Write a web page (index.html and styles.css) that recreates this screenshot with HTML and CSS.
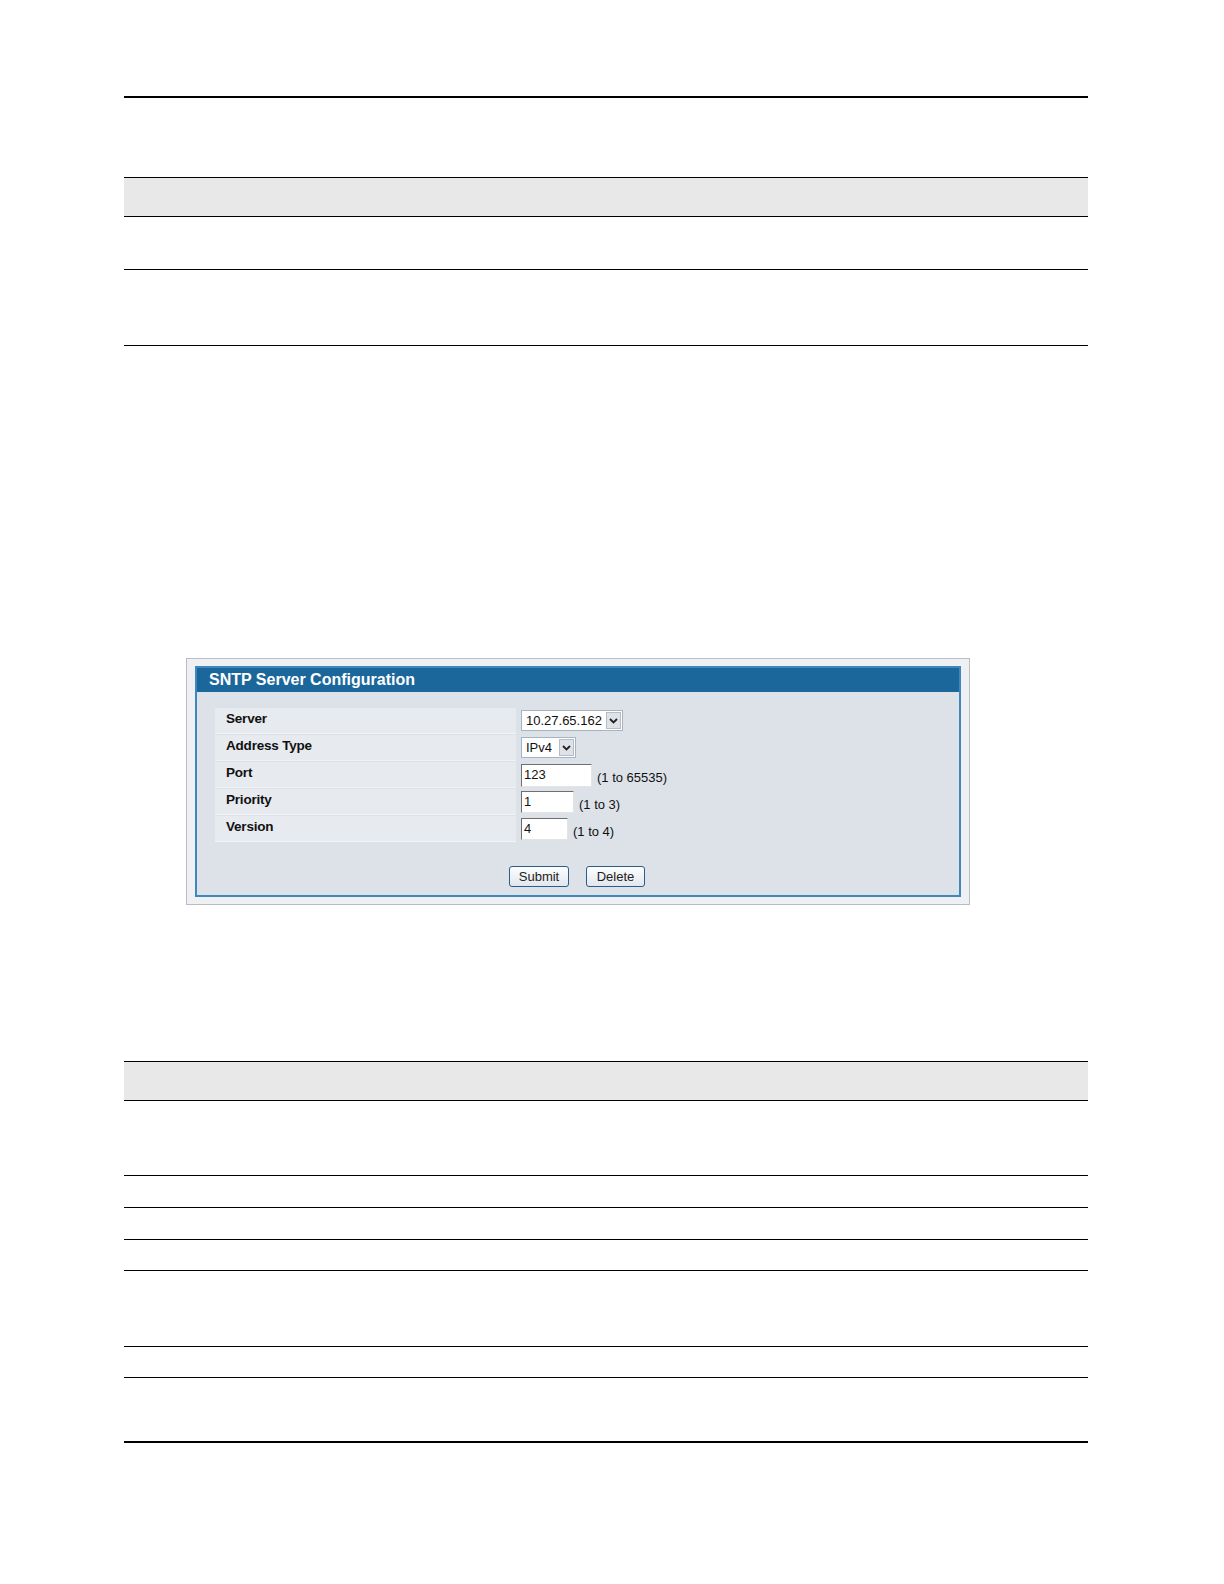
FILE: index.html
```html
<!DOCTYPE html>
<html lang="en">
<head>
<meta charset="utf-8">
<title>SNTP Server Configuration</title>
<link rel="stylesheet" href="styles.css">
</head>
<body>
<div class="page">
  <div class="rule"></div>

  <div class="doc-table t1">
    <div class="tr th h39"></div>
    <div class="tr h52"></div>
    <div class="tr h75"></div>
  </div>

  <div class="shot">
    <div class="panel">
      <div class="panel-title">SNTP Server Configuration</div>
      <div class="panel-body">
        <div class="form-grid">
          <div class="lbl">Server</div>
          <div class="val">
            <div class="select w-server"><span class="sel-text">10.27.65.162</span><span class="sel-btn"><svg width="9" height="6" viewBox="0 0 9 6"><path d="M1 1 L4.5 4.5 L8 1" fill="none" stroke="#222" stroke-width="1.8"/></svg></span></div>
          </div>
          <div class="lbl">Address Type</div>
          <div class="val">
            <div class="select w-type"><span class="sel-text">IPv4</span><span class="sel-btn"><svg width="9" height="6" viewBox="0 0 9 6"><path d="M1 1 L4.5 4.5 L8 1" fill="none" stroke="#222" stroke-width="1.8"/></svg></span></div>
          </div>
          <div class="lbl">Port</div>
          <div class="val"><span class="input w-port">123</span><span class="hint">(1 to 65535)</span></div>
          <div class="lbl">Priority</div>
          <div class="val"><span class="input w-prio">1</span><span class="hint">(1 to 3)</span></div>
          <div class="lbl">Version</div>
          <div class="val"><span class="input w-ver">4</span><span class="hint">(1 to 4)</span></div>
        </div>
        <div class="buttons">
          <button class="btn w-submit" type="button">Submit</button>
          <button class="btn w-delete" type="button">Delete</button>
        </div>
      </div>
    </div>
  </div>

  <div class="doc-table t2">
    <div class="tr th h39"></div>
    <div class="tr h74"></div>
    <div class="tr h31"></div>
    <div class="tr h31"></div>
    <div class="tr h30"></div>
    <div class="tr h75"></div>
    <div class="tr h30"></div>
  </div>

  <div class="rule bottom"></div>
</div>
</body>
</html>
```

FILE: styles.css
```css
html, body {
  margin: 0;
  padding: 0;
  background: #ffffff;
}

body {
  font-family: "Liberation Sans", Arial, sans-serif;
  color: #000;
}

.page {
  width: 964px;
  margin-left: 124px;
  padding-top: 96px;
}

.rule {
  border-top: 2px solid #000;
}

.rule.bottom {
  margin-top: 63px;
}

.doc-table {
  border-top: 1px solid #000;
}

.t1 {
  margin-top: 79px;
}

.t2 {
  margin-top: 156px;
}

.tr {
  border-bottom: 1px solid #000;
}

.th {
  background: #e8e8e8;
}

.h30 { height: 30px; }
.h31 { height: 31px; }
.h39 { height: 38px; }
.h52 { height: 52px; }
.h74 { height: 74px; }
.h75 { height: 75px; }

/* screenshot frame */
.shot {
  margin-top: 312px;
  margin-left: 62px;
  width: 766px;
  padding: 7px 8px 7px 8px;
  border: 1px solid #b9bdc2;
  background: #eef0f3;
}

.panel {
  border: 2px solid #3f88bb;
  background: #dde2e8;
}

.panel-title {
  height: 24px;
  line-height: 23px;
  background: #1b679b;
  color: #ffffff;
  font-weight: bold;
  font-size: 16px;
  padding-left: 12px;
}

.panel-body {
  padding: 16px 18px 8px 18px;
}

.form-grid {
  display: grid;
  grid-template-columns: 301px 1fr;
  column-gap: 5px;
  row-gap: 1px;
  grid-auto-rows: 26px;
}

.lbl {
  background: #e7eaee;
  border-bottom: 1px solid #f1f3f5;
  font-weight: bold;
  font-size: 13.5px;
  letter-spacing: -0.2px;
  padding-left: 11px;
  line-height: 21px;
  color: #111;
}

.val {
  display: flex;
  align-items: flex-start;
  padding-top: 2px;
  font-size: 13px;
}

.select {
  display: flex;
  height: 20px;
  background: #fff;
  border: 1px solid #a5b3c2;
  box-sizing: border-box;
}

.sel-text {
  flex: 1;
  padding-left: 4px;
  line-height: 19px;
  font-size: 13px;
  color: #111;
}

.sel-btn {
  width: 15px;
  margin: 1px;
  display: flex;
  align-items: center;
  justify-content: center;
  background: #dfe3e8;
  border: 1px solid #b3bcc7;
  box-sizing: border-box;
}

.w-server { width: 102px; height: 21px; }
.w-type { width: 55px; height: 21px; }

.input {
  display: block;
  height: 22px;
  box-sizing: border-box;
  background: #fff;
  border-top: 1px solid #6f6f6f;
  border-left: 1px solid #6f6f6f;
  border-right: 1px solid #e4e4e4;
  border-bottom: 1px solid #e4e4e4;
  padding-left: 2px;
  line-height: 19px;
  font-size: 13px;
  color: #111;
}

.w-port { width: 71px; height: 23px; }
.w-prio { width: 53px; }
.w-ver { width: 47px; }

.hint {
  font-size: 13px;
  margin-left: 5px;
  margin-top: 6px;
  color: #111;
}

.buttons {
  display: flex;
  justify-content: center;
  gap: 17px;
  margin-top: 24px;
  padding-right: 2px;
}

.btn {
  height: 21px;
  padding: 0;
  font-family: "Liberation Sans", Arial, sans-serif;
  font-size: 13px;
  color: #222;
  border: 1px solid #2a5d8a;
  border-radius: 3px;
  background: linear-gradient(#fdfdfd, #e2e7ee);
}

.w-submit { width: 60px; }
.w-delete { width: 59px; }
```
